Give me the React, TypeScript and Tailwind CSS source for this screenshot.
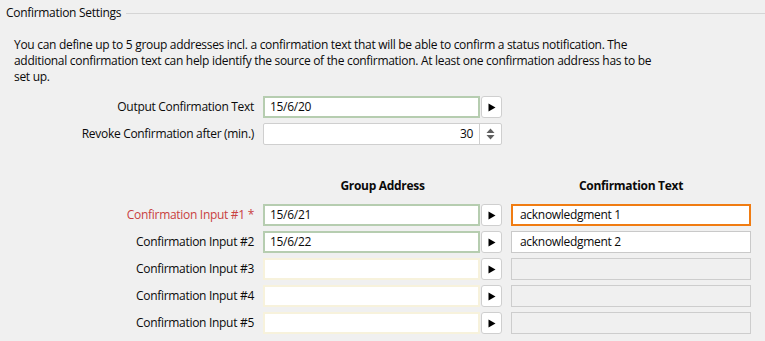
import React from "react";

const Arrow = () => (
  <svg width="9" height="9" viewBox="0 0 9 9"><path d="M1.5 0.5 L8.5 4.5 L1.5 8.5 Z" fill="#000" /></svg>
);

const PickBtn = () => (
  <div className="w-[21px] h-[22px] ml-px bg-white border border-[#cfcfcf] rounded-[3px] flex items-center justify-center">
    <Arrow />
  </div>
);

type Row = { label: string; addr: string; text: string; req?: boolean; state: "ok" | "empty"; conf: "focus" | "filled" | "disabled" };

const rows: Row[] = [
  { label: "Confirmation Input #1 *", addr: "15/6/21", text: "acknowledgment 1", req: true, state: "ok", conf: "focus" },
  { label: "Confirmation Input #2", addr: "15/6/22", text: "acknowledgment 2", state: "ok", conf: "filled" },
  { label: "Confirmation Input #3", addr: "", text: "", state: "empty", conf: "disabled" },
  { label: "Confirmation Input #4", addr: "", text: "", state: "empty", conf: "disabled" },
  { label: "Confirmation Input #5", addr: "", text: "", state: "empty", conf: "disabled" },
];

export default function App() {
  return (
    <div
      className="w-[765px] h-[341px] bg-[#f0f0f0] text-[#0a0a0a] text-[12px] leading-[16px] tracking-[-0.3px] overflow-hidden"
      style={{ fontFamily: '"Open Sans", "Noto Sans", sans-serif' }}
    >
      <div className="flex items-center pt-[5px] pl-[6px]">
        <span className="whitespace-nowrap">Confirmation Settings</span>
        <div className="flex-1 h-px bg-[#d5d5d5] ml-[5px]" />
      </div>
      <div className="pl-[14px] pt-[16px]">
        You can define up to 5 group addresses incl. a confirmation text that will be able to confirm a status notification. The
        <br />
        additional confirmation text can help identify the source of the confirmation. At least one confirmation address has to be
        <br />
        set up.
      </div>

      <div className="mt-[11px] flex items-center h-[22px]">
        <div className="w-[254px] text-right pr-0">Output Confirmation Text</div>
        <div className="ml-[9px] w-[217px] h-[22px] bg-white border-2 border-[#b6cdb0] flex items-center px-[5px]">15/6/20</div>
        <PickBtn />
      </div>
      <div className="mt-[5px] flex items-center h-[22px]">
        <div className="w-[254px] text-right">Revoke Confirmation after (min.)</div>
        <div className="ml-[9px] w-[239px] h-[22px] bg-white border border-[#cfcfcf] rounded-[2px] flex items-center">
          <div className="flex-1 text-right pr-[6px]">30</div>
          <div className="w-[22px] h-full border-l border-[#cfcfcf] flex items-center justify-center">
            <svg width="9" height="12" viewBox="0 0 9 12">
              <path d="M4.5 0.5 L8.5 5 L0.5 5 Z" fill="#606060" />
              <path d="M0.5 7 L8.5 7 L4.5 11.5 Z" fill="#606060" />
            </svg>
          </div>
        </div>
      </div>

      <div className="mt-[33px] flex items-center h-[16px] font-bold">
        <div className="w-[263px]" />
        <div className="w-[239px] text-center">Group Address</div>
        <div className="ml-[9px] w-[240px] text-center">Confirmation Text</div>
      </div>

      <div className="mt-[10px] flex flex-col gap-[5px]">
        {rows.map((r) => (
          <div key={r.label} className="flex items-center h-[22px]">
            <div className={"w-[254px] text-right " + (r.req ? "text-[#c8403f]" : "")}>{r.label}</div>
            <div
              className={
                "ml-[9px] w-[217px] h-[22px] bg-white border-2 flex items-center px-[5px] " +
                (r.state === "ok" ? "border-[#b6cdb0]" : "border-[#f7f2dc]")
              }
            >
              {r.addr}
            </div>
            <PickBtn />
            {r.conf === "focus" && (
              <div className="ml-[9px] w-[240px] h-[22px] bg-white border-2 border-[#f07c12] flex items-center px-[7px]">{r.text}</div>
            )}
            {r.conf === "filled" && (
              <div className="ml-[9px] w-[240px] h-[22px] bg-white border border-[#c9c9c9] flex items-center px-[8px]">{r.text}</div>
            )}
            {r.conf === "disabled" && (
              <div className="ml-[9px] w-[240px] h-[22px] bg-[#f0f0f0] border border-[#cdcdcd]" />
            )}
          </div>
        ))}
      </div>
    </div>
  );
}
